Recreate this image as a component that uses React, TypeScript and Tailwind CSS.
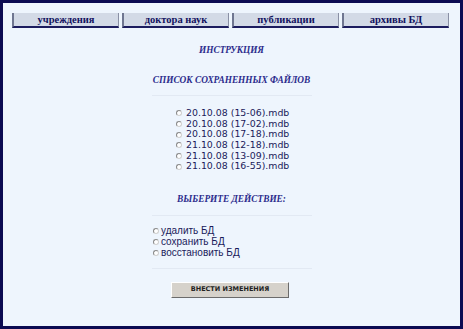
const tabs = ["учреждения", "доктора наук", "публикации", "архивы БД"];

const files = [
  "20.10.08 (15-06).mdb",
  "20.10.08 (17-02).mdb",
  "20.10.08 (17-18).mdb",
  "21.10.08 (12-18).mdb",
  "21.10.08 (13-09).mdb",
  "21.10.08 (16-55).mdb",
];

const actions = ["удалить БД", "сохранить БД", "восстановить БД"];

function Radio() {
  return (
    <span className="inline-block w-[6px] h-[6px] rounded-full border border-[#8a8a8a] border-b-[#d0d0d0] border-r-[#d0d0d0] bg-white shrink-0" />
  );
}

function Heading({ children }: { children: React.ReactNode }) {
  return (
    <div className="text-center text-[9.3px] font-bold italic text-[#2b2b8c] [font-family:'Liberation_Serif',serif]">
      {children}
    </div>
  );
}

function Rule() {
  return <div className="mx-auto w-[160px] h-px bg-[#e2e9f3]" />;
}

export default function App() {
  return (
    <div className="w-[463px] h-[329px] bg-[#0b0b52] p-[3px] box-border">
      <div className="w-full h-full bg-[#eef5fd] flex flex-col">
        {/* nav tabs */}
        <div className="flex gap-[3px] pl-[9px] pt-[10px]">
          {tabs.map((t) => (
            <div
              key={t}
              className="w-[107px] h-[15px] flex items-center justify-center bg-[#d3dae6] border-l-2 border-l-[#6f7690] border-b-2 border-b-[#1c1c5e] border-r border-r-[#8a90a4] text-[10.5px] font-bold text-[#12125e] [font-family:'Liberation_Serif',serif]"
            >
              {t}
            </div>
          ))}
        </div>

        <div className="mt-[16px]">
          <Heading>ИНСТРУКЦИЯ</Heading>
        </div>
        <div className="mt-[16px]">
          <Heading>СПИСОК СОХРАНЕННЫХ ФАЙЛОВ</Heading>
        </div>
        <div className="mt-[7px]">
          <Rule />
        </div>

        {/* file list */}
        <div className="mt-[12px] flex flex-col pl-[173px] text-[9.4px] leading-[10.7px] text-[#1a1a5a] [font-family:'DejaVu_Sans',sans-serif]">
          {files.map((f) => (
            <div key={f} className="flex items-center gap-[4px]">
              <Radio />
              <span>{f}</span>
            </div>
          ))}
        </div>

        <div className="mt-[21px]">
          <Heading>ВЫБЕРИТЕ ДЕЙСТВИЕ:</Heading>
        </div>
        <div className="mt-[8px]">
          <Rule />
        </div>

        {/* actions */}
        <div className="mt-[9px] flex flex-col pl-[150px] text-[10px] leading-[11px] text-[#1a1a5a] [font-family:'Liberation_Sans',sans-serif]">
          {actions.map((a) => (
            <div key={a} className="flex items-center gap-[2px]">
              <Radio />
              <span>{a}</span>
            </div>
          ))}
        </div>
        <div className="mt-[10px]">
          <Rule />
        </div>

        <div className="mt-[13px] flex pl-[168px]">
          <button className="w-[118px] h-[16px] flex items-center justify-center bg-[#d6d2cb] border border-t-white border-l-white border-b-[#6b6b6b] border-r-[#6b6b6b] text-[6.5px] font-bold text-[#222] [font-family:'DejaVu_Sans',sans-serif]">
            ВНЕСТИ ИЗМЕНЕНИЯ
          </button>
        </div>
      </div>
    </div>
  );
}
